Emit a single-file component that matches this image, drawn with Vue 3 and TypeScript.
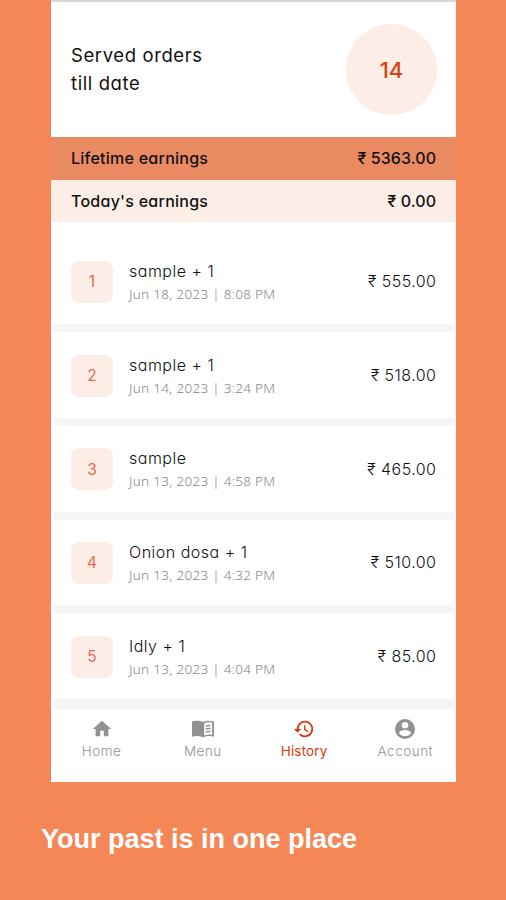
<script setup lang="ts">
interface Order {
  id: number
  title: string
  date: string
  amount: string
}

const orders: Order[] = [
  { id: 1, title: 'sample + 1', date: 'Jun 18, 2023 | 8:08 PM', amount: '₹ 555.00' },
  { id: 2, title: 'sample + 1', date: 'Jun 14, 2023 | 3:24 PM', amount: '₹ 518.00' },
  { id: 3, title: 'sample', date: 'Jun 13, 2023 | 4:58 PM', amount: '₹ 465.00' },
  { id: 4, title: 'Onion dosa + 1', date: 'Jun 13, 2023 | 4:32 PM', amount: '₹ 510.00' },
  { id: 5, title: 'Idly + 1', date: 'Jun 13, 2023 | 4:04 PM', amount: '₹ 85.00' },
]
</script>

<template>
  <main class="page">
    <section class="phone">
      <header class="summary">
        <h1 class="heading">Served orders<br />till date</h1>
        <div class="count">14</div>
      </header>
      <div class="band lifetime">
        <span class="label">Lifetime earnings</span><span class="total">₹ 5363.00</span>
      </div>
      <div class="band today">
        <span class="label">Today's earnings</span><span class="total">₹ 0.00</span>
      </div>
      <ul class="orders">
        <li v-for="order in orders" :key="order.id" class="order">
          <span class="index">{{ order.id }}</span>
          <div class="details">
            <span class="title">{{ order.title }}</span>
            <span class="date">{{ order.date }}</span>
          </div>
          <span class="amount">{{ order.amount }}</span>
        </li>
      </ul>
      <nav class="tabs">
        <a class="tab">
          <svg class="icon" viewBox="0 0 24 24"><path d="M10 20v-6h4v6h5v-8h3L12 3 2 12h3v8z" /></svg>
          <span>Home</span>
        </a>
        <a class="tab">
          <svg class="icon wide" viewBox="0 0 24 24">
            <path d="M1 4.500C4.500 3.200 9 3.400 12 5c3-1.600 7.500-1.800 11-.5v15.300c-3.500-1.200-8-1-11 .8-3-1.800-7.500-2-11-.8z" />
            <path class="paper" d="M13.200 6.400c2.500-1.200 5.300-1.400 7.900-.6v12c-2.600-.6-5.400-.4-7.900.7z" />
            <path class="lines" d="M14.600 9.200q2.500-.9 5-.6M14.600 12.200q2.500-.9 5-.6M14.600 15.200q2.500-.9 5-.6" />
          </svg>
          <span>Menu</span>
        </a>
        <a class="tab active">
          <svg class="icon" viewBox="0 0 24 24"><path d="M13 3a9 9 0 0 0-9 9H1l3.890 3.890.070.140L9 12H6a7 7 0 1 1 2.060 4.940l-1.420 1.420A9 9 0 1 0 13 3zm-1 5v5l4.250 2.520.770-1.280-3.520-2.090V8z" /></svg>
          <span>History</span>
        </a>
        <a class="tab">
          <svg class="icon account" viewBox="0 0 24 24"><path d="M12 2a10 10 0 1 0 0 20 10 10 0 0 0 0-20zm0 3a3.300 3.300 0 1 1 0 6.600A3.300 3.300 0 0 1 12 5zm0 14.200a7.200 7.200 0 0 1-6-3.220c.030-1.990 4-3.080 6-3.080s5.970 1.090 6 3.080a7.200 7.200 0 0 1-6 3.220z" /></svg>
          <span>Account</span>
        </a>
      </nav>
    </section>
    <p class="caption">Your past is in one place</p>
  </main>
</template>

<style>
body {
  margin: 0;
  background: #f58757;
}
</style>

<style scoped>
.page {
  box-sizing: border-box;
  height: 900px;
  padding-left: 51px;
  overflow: hidden;
  background: #f58757;
  font-family: Inter, 'Liberation Sans', sans-serif;
  font-feature-settings: 'cv11';
  color: #111;
}
.phone {
  box-sizing: border-box;
  display: flex;
  flex-direction: column;
  width: 405px;
  height: 782px;
  border-top: 2px solid #d7d7d7;
  background: #fff;
}
.summary {
  display: flex;
  justify-content: space-between;
  align-items: center;
  height: 135px;
  padding: 0 19px 0 20px;
}
.heading {
  margin: 0 0 2px;
  font-size: 18.500px;
  font-weight: 400;
  line-height: 28px;
  letter-spacing: 0.600px;
}
.count {
  display: flex;
  align-items: center;
  justify-content: center;
  width: 91px;
  height: 91px;
  border-radius: 50%;
  background: #fdede7;
  color: #d9420f;
  font-size: 22px;
  font-weight: 500;
}
.band {
  box-sizing: border-box;
  display: flex;
  flex: none;
  align-items: center;
  justify-content: space-between;
  height: 42px;
  padding: 0 20px;
  font-size: 16px;
  font-weight: 500;
}
.label {
  letter-spacing: 0.250px;
}
.total {
  margin-right: -0.200px;
  letter-spacing: 0.100px;
}
.lifetime {
  height: 43px;
  padding-bottom: 2px;
  background: #e98a63;
}
.today {
  background: #fdede7;
}
.orders {
  margin: 0;
  padding: 16.500px 2px 0 3px;
  list-style: none;
}
.order {
  box-sizing: border-box;
  display: flex;
  align-items: center;
  height: 93.700px;
  padding: 1px 18px 0 17px;
  border-bottom: 8px solid #f5f5f5;
}
.order:last-child {
  height: 95.700px;
  border-bottom-width: 10px;
}
.index {
  display: flex;
  align-items: center;
  justify-content: center;
  width: 42px;
  height: 42px;
  margin-right: 16px;
  border-radius: 8px;
  background: #fdede7;
  color: #e66a4f;
  font-size: 15.500px;
}
.details {
  display: flex;
  flex-direction: column;
  flex: 1;
  padding-top: 1.400px;
}
.title {
  font-size: 16px;
  font-weight: 300;
  line-height: 23px;
  letter-spacing: 0.500px;
}
.date {
  font-family: 'Noto Sans', sans-serif;
  font-size: 13.500px;
  font-weight: 300;
  line-height: 22px;
  letter-spacing: 0.300px;
  color: #858585;
}
.amount {
  margin: 0 -0.400px 1px 0;
  font-size: 16px;
  font-weight: 300;
  letter-spacing: 0.450px;
}
.tabs {
  display: grid;
  grid-template-columns: repeat(4, 1fr);
  padding-top: 8px;
}
.tab {
  display: flex;
  flex-direction: column;
  align-items: center;
  color: #929292;
  font-size: 13.500px;
  font-weight: 300;
  line-height: 20px;
  letter-spacing: 0.500px;
}
.active {
  color: #d93a12;
  font-weight: 400;
  letter-spacing: 0.150px;
}
.icon {
  width: 22px;
  height: 24px;
  fill: currentColor;
}
.wide,
.account {
  width: 24px;
}
.paper {
  fill: #fff;
}
.lines {
  fill: none;
  stroke: currentColor;
  stroke-width: 1.300;
}
.caption {
  margin: 41px 0 0 -10px;
  font-family: 'Liberation Sans', sans-serif;
  font-size: 27px;
  font-weight: 700;
  line-height: 32px;
  color: #fff;
}
</style>
